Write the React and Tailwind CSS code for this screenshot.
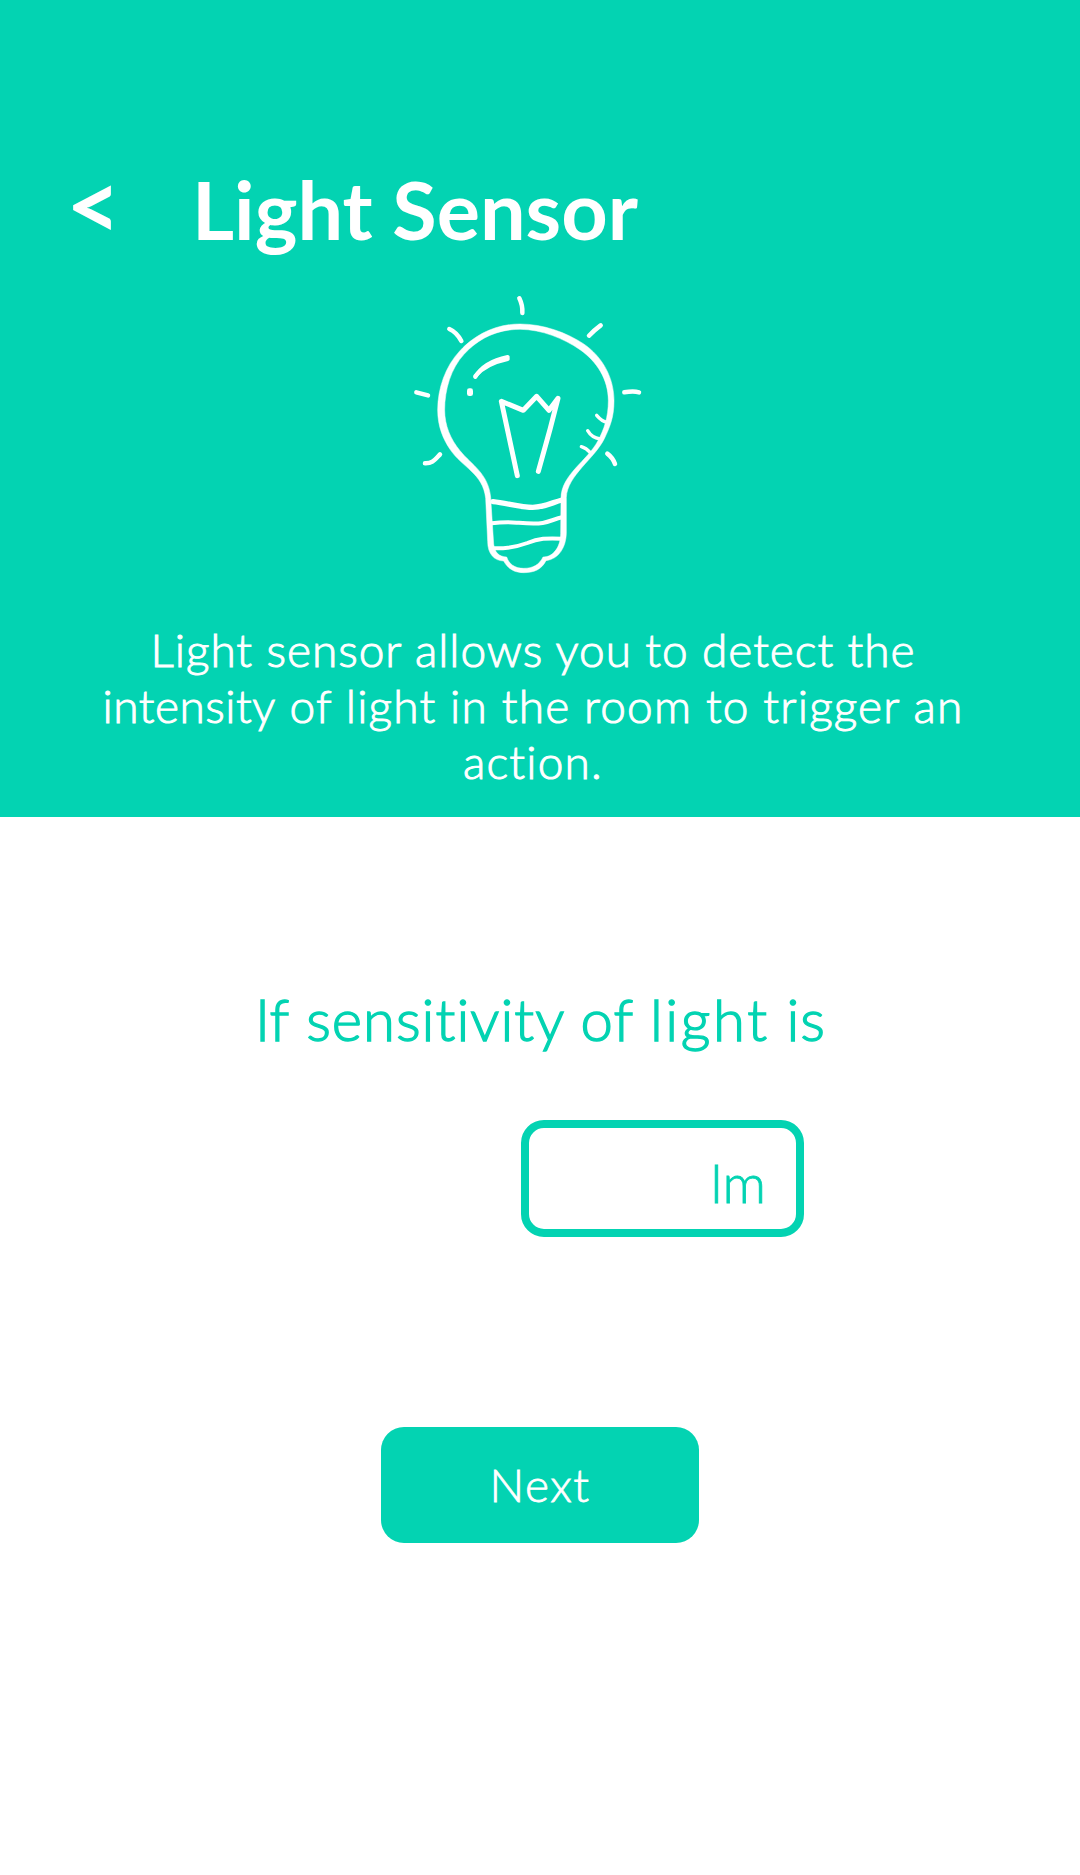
const stroke = { fill: "none", stroke: "white", strokeLinecap: "round", strokeLinejoin: "round" };

function Bulb() {
  return (
    <svg className="block h-[310px] w-[260px]" viewBox="0 0 780 930" aria-hidden="true">
      {/* glass and base outline */}
      <path
        fill="white"
        stroke="white"
        strokeWidth="1.5"
        fillRule="evenodd"
        d="M360 132C430 132 500 158 550 191C608 230 642 294 642 362C642 412 630 440 613 476C584 536 502 586 499 652L499 760C498 800 478 837 438 842C425 868 403 878 371 878C339 878 321 862 311 843C283 842 263 823 263 784L257 655C249 580 188 564 150 508C130 478 113 440 113 390C113 325 136 259 180 212C225 164 287 132 360 132Z
           M360 148C290 148 235 176 192 223C153 265 134 328 134 390C134 437 152 478 180 512C215 555 265 580 272 652L281 792C284 818 297 830 320 831C327 852 344 865 371 865C399 865 418 854 429 831C458 832 482 803 482 760L483 655C483 584 562 543 594 482C612 448 625 412 625 362C625 298 591 245 540 209C492 176 425 148 360 148Z"
      />
      {/* screw threads */}
      <g {...stroke}>
        <path strokeWidth="16" d="M279 665C320 669 360 682 398 682C432 682 458 667 486 660" />
        <path strokeWidth="12" d="M275 730C300 727 322 726 350 728C385 731 403 733 428 729C450 725 466 716 486 712" />
        <path strokeWidth="12" d="M280 805C320 806 350 801 382 789C416 775 440 774 486 776" />
      </g>
      {/* filament */}
      <path {...stroke} strokeWidth="15" d="M352 587L320 438L304 364L370 391L410 349L447 391L474 355L450 448L415 574" />
      {/* highlight and shading */}
      <g {...stroke}>
        <path strokeWidth="12" d="M226 291C242 263 270 242 323 231" />
        <path strokeWidth="12" d="M226 288C244 266 272 248 323 237" />
        <path strokeWidth="10" d="M590 406C600 418 608 425 622 427" />
        <path strokeWidth="10" d="M563 452C571 466 582 474 600 477" />
        <path strokeWidth="10" d="M544 500C555 503 563 509 571 518" />
      </g>
      <rect x="201" y="325" width="18" height="23" rx="7" fill="white" />
      {/* rays */}
      <g {...stroke} strokeWidth="13.5">
        <path d="M358 55C366 71 368 82 367 99" />
        <path d="M148 147C164 154 174 164 184 183" />
        <path d="M567 167C580 153 590 145 602 136" />
        <path d="M49 337L84 346" />
        <path d="M673 337C690 334 704 333 717 337" />
        <path d="M75 550C96 551 103 541 120 523" />
        <path d="M622 521C634 530 640 538 645 552" />
      </g>
    </svg>
  );
}

export default function App() {
  return (
    <main className="flex h-[1875px] w-[1080px] flex-col overflow-hidden bg-white font-['Lato',sans-serif] font-light">
      <header className="flex h-[817px] shrink-0 flex-col bg-[#03d3b2] text-white">
        <div className="mt-[159px] flex h-[100px] items-center font-bold">
          <button className="ml-[66px] h-[100px] w-[126px] text-left text-[95px] leading-[89px]" aria-label="Back">
            <span className="block h-[100px]">&lt;</span>
          </button>
          <h1 className="whitespace-nowrap text-[81px] leading-[100px]">Light Sensor</h1>
        </div>
        <div className="mt-[21px] ml-[400px]">
          <Bulb />
        </div>
        <p className="mt-[32px] flex w-[1066px] flex-col items-center whitespace-nowrap text-[46px] leading-[56px] [-webkit-text-stroke:1px_currentColor]">
          <span className="tracking-[0.95px]">Light sensor allows you to detect the</span>
          <span className="tracking-[1.2px]">
            <span className="tracking-[0.5px]">intensity</span> of light in the room to trigger an
          </span>
          <span className="tracking-[1.2px]">action.</span>
        </p>
      </header>
      <section className="flex flex-col text-[#03d3b2]">
        <h2 className="mt-[167px] ml-[255px] whitespace-nowrap text-[58px] leading-[70px] tracking-[1px] [-webkit-text-stroke:1.4px_currentColor]">
          <span className="tracking-[0.2px]">If</span> sensitivity of <span className="tracking-[2.6px]">light</span> is
        </h2>
        <div className="mt-[66px] ml-[521px] flex h-[117px] w-[283px] items-center justify-end rounded-[23px] border-8 border-[#03d3b2] pr-[30px] pt-[8px] text-[54px] leading-[64px] [-webkit-text-stroke:0.8px_currentColor]">
          lm
        </div>
        <button className="mt-[190px] ml-[381px] h-[116px] w-[318px] rounded-[23px] bg-[#03d3b2] text-[46px] leading-[56px] tracking-[1.5px] text-white [-webkit-text-stroke:0.8px_currentColor]">
          Next
        </button>
      </section>
    </main>
  );
}
